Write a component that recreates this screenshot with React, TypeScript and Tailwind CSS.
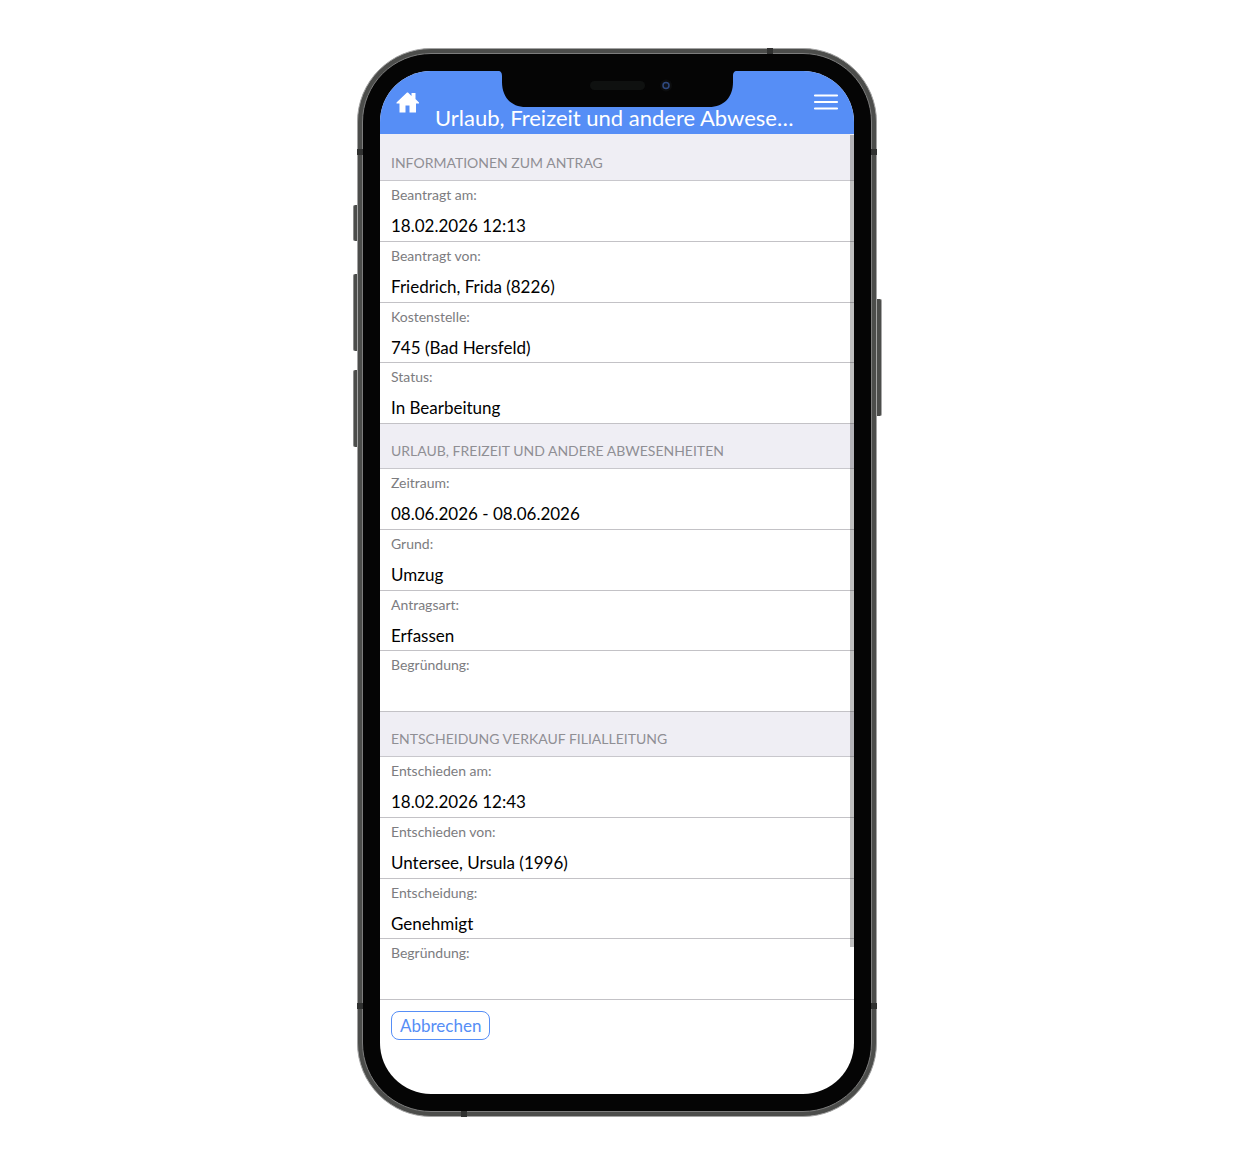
import { useState } from "react";
import type { ReactNode } from "react";

type Field = {
  label: string;
  value: string;
};

type Section = {
  title: string;
  fields: Field[];
};

const sections: Section[] = [
  {
    title: "Informationen zum Antrag",
    fields: [
      { label: "Beantragt am:", value: "18.02.2026 12:13" },
      { label: "Beantragt von:", value: "Friedrich, Frida (8226)" },
      { label: "Kostenstelle:", value: "745 (Bad Hersfeld)" },
      { label: "Status:", value: "In Bearbeitung" },
    ],
  },
  {
    title: "Urlaub, Freizeit und andere Abwesenheiten",
    fields: [
      { label: "Zeitraum:", value: "08.06.2026 - 08.06.2026" },
      { label: "Grund:", value: "Umzug" },
      { label: "Antragsart:", value: "Erfassen" },
      { label: "Begründung:", value: "" },
    ],
  },
  {
    title: "Entscheidung Verkauf Filialleitung",
    fields: [
      { label: "Entschieden am:", value: "18.02.2026 12:43" },
      { label: "Entschieden von:", value: "Untersee, Ursula (1996)" },
      { label: "Entscheidung:", value: "Genehmigt" },
      { label: "Begründung:", value: "" },
    ],
  },
];

function HomeIcon() {
  return (
    <svg viewBox="0 0 24 21" className="w-6 h-[21px]" fill="currentColor" aria-hidden="true">
      <path d="M11 0.5 0.5 10.5V11.5H3.5V20.5H9.5V13.5H13.5V20.5H20V11.5H23V10.5L19.5 7V1H15.5V4L12 0.5Z" />
    </svg>
  );
}

function MenuIcon() {
  return (
    <svg viewBox="0 0 26 18" className="w-[26px] h-[18px]" stroke="currentColor" strokeWidth="2.2" strokeLinecap="round" aria-hidden="true">
      <path d="M2 2.5H24M2 9H24M2 15.5H24" />
    </svg>
  );
}

function Notch() {
  return (
    <svg viewBox="0 0 239 37" className="w-[239px] h-[37px]" aria-hidden="true">
      <path d="M0 0H239C236 0 235 2 235 5V11C235 26 226 36 211 36H28C13 36 4 26 4 11V5C4 2 3 0 0 0Z" fill="#050505" />
      <rect x="92" y="10" width="55" height="9" rx="4.5" fill="#0f1110" />
      <circle cx="168" cy="14.5" r="6" fill="#0c0d0e" />
      <circle cx="168" cy="14.5" r="3" fill="#10141c" stroke="#2f4a80" strokeWidth="1.5" />
    </svg>
  );
}

function PhoneFrame({ children }: { children: ReactNode }) {
  return (
    <div className="relative w-full max-w-[520px]">
      {/* Side keys */}
      <div className="absolute right-full top-[157px] flex flex-col">
        <span className="w-1 h-9 rounded-l-xs bg-[#4c4d4b] border-l border-[#8c8c8c]" />
        <span className="mt-[33px] w-1 h-[77px] rounded-l-xs bg-[#4c4d4b] border-l border-[#8c8c8c]" />
        <span className="mt-[19px] w-1 h-[77px] rounded-l-xs bg-[#4c4d4b] border-l border-[#8c8c8c]" />
      </div>
      <div className="absolute left-full top-[251px]">
        <span className="block w-[5px] h-[117px] rounded-r-xs bg-[#4c4d4b] border-r border-[#a8a8a8]" />
      </div>

      <div className="rounded-[74px] bg-[#4c4d4b] border border-[#a3a3a3] p-1">
        <div className="rounded-[69px] bg-[#050505] border border-[#7d7d7d] p-[17px]">
          <div className="relative overflow-hidden rounded-[51px] bg-white">{children}</div>
        </div>
      </div>

      {/* Antenna bands */}
      <div className="absolute inset-0 pointer-events-none flex flex-col justify-between">
        <div className="flex justify-end px-[104px]">
          <span className="size-[6px] bg-[#303130]" />
        </div>
        <div className="flex-1 flex flex-col justify-between pt-[95px] pb-[102px]">
          <div className="flex justify-between">
            <span className="size-[6px] bg-[#303130]" />
            <span className="size-[6px] bg-[#303130]" />
          </div>
          <div className="flex justify-between">
            <span className="size-[6px] bg-[#303130]" />
            <span className="size-[6px] bg-[#303130]" />
          </div>
        </div>
        <div className="flex px-[104px]">
          <span className="size-[6px] bg-[#303130]" />
        </div>
      </div>
    </div>
  );
}

export default function App() {
  const [cancelled, setCancelled] = useState(false);

  return (
    <main className="min-h-screen bg-white flex justify-center items-start py-12 font-['Lato',sans-serif]">
      <PhoneFrame>
        <header className="h-[63px] bg-[#568ef6] text-white flex justify-between items-start gap-[15px] pl-4 pr-[15px]">
          <button type="button" aria-label="Startseite" className="mt-[21px]">
            <HomeIcon />
          </button>
          <h1 className="flex-1 min-w-0 truncate mt-[33px] text-[22px] leading-7">
            Urlaub, Freizeit und andere Abwesenheiten
          </h1>
          <button type="button" aria-label="Menü" className="mt-[22px]">
            <MenuIcon />
          </button>
        </header>
        <div className="absolute inset-x-0 top-0 flex justify-center pointer-events-none">
          <Notch />
        </div>

        <div className="relative">
          <div className="bg-[#efeef4] pt-[2px]">
            {sections.map((section) => (
              <section key={section.title}>
                <h2 className="h-[45px] px-[11px] pt-[17px] border-b border-[#c8c7cc] text-[14px] leading-5 uppercase text-[#8f8f94]">
                  {section.title}
                </h2>
                <dl className="grid grid-rows-4 h-[243px] bg-white">
                  {section.fields.map((field) => (
                    <div key={field.label} className="px-[11px] pt-1 border-b border-[#c3c2c6]">
                      <dt className="text-[14px] leading-5 text-[#7c7c80]">{field.label}</dt>
                      <dd className="mt-[9px] text-[17px] leading-6 text-black">{field.value}</dd>
                    </div>
                  ))}
                </dl>
              </section>
            ))}
          </div>
          {/* Scroll indicator */}
          <span className="absolute right-0 top-px w-1 bottom-[53px] bg-black/25" />
        </div>

        <div className="px-[11px] pt-[11px] pb-[54px]">
          <button
            type="button"
            disabled={cancelled}
            onClick={() => setCancelled(true)}
            className="h-[29px] px-2 rounded-lg border border-[#568ef6] text-[17px] leading-6 text-[#568ef6] block"
          >
            Abbrechen
          </button>
        </div>
      </PhoneFrame>
    </main>
  );
}
